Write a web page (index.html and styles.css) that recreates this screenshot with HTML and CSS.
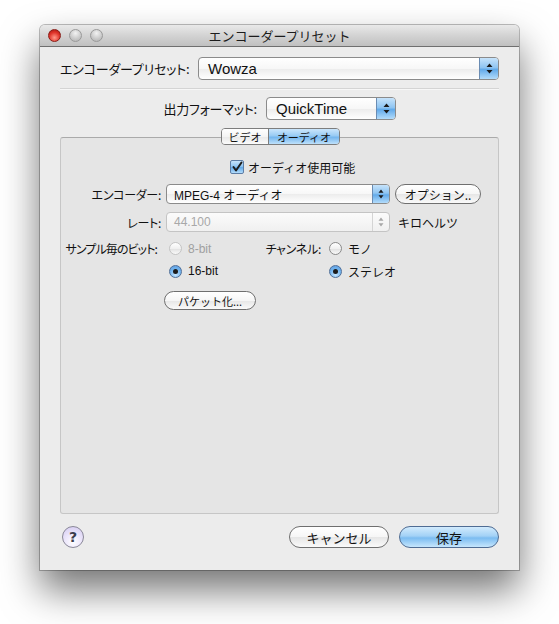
FILE: index.html
```html
<!DOCTYPE html>
<html lang="ja">
<head>
<meta charset="utf-8">
<title>エンコーダープリセット</title>
<link rel="stylesheet" href="styles.css">
</head>
<body>
<div class="stage">
  <div class="window">
    <div class="titlebar">
      <div class="lights">
        <span class="light red"></span>
        <span class="light"></span>
        <span class="light"></span>
      </div>
      <div class="title">エンコーダープリセット</div>
    </div>
    <div class="content">
      <div class="row preset-row">
        <span class="label">エンコーダープリセット:</span>
        <div class="popup big grow">
          <span class="popup-text">Wowza</span>
          <span class="arrows"><svg width="7" height="11" viewBox="0 0 7 11"><path d="M3.5 0.5 L6.5 4 L0.5 4 Z M0.5 7 L6.5 7 L3.5 10.5 Z" fill="#1a1a1a"/></svg></span>
        </div>
      </div>
      <div class="separator"></div>
      <div class="row format-row">
        <span class="label">出力フォーマット:</span>
        <div class="popup big format">
          <span class="popup-text">QuickTime</span>
          <span class="arrows"><svg width="7" height="11" viewBox="0 0 7 11"><path d="M3.5 0.5 L6.5 4 L0.5 4 Z M0.5 7 L6.5 7 L3.5 10.5 Z" fill="#1a1a1a"/></svg></span>
        </div>
      </div>
      <div class="tabs-wrap">
        <div class="tabs">
          <span class="tab">ビデオ</span>
          <span class="tab active">オーディオ</span>
        </div>
        <div class="box">
          <div class="check-row">
            <span class="checkbox"><svg width="12" height="12" viewBox="0 0 12 12"><path d="M2.5 6 L5 9.5 L10.5 1.5" fill="none" stroke="#1c1c1c" stroke-width="2" stroke-linecap="round" stroke-linejoin="round"/></svg></span>
            <span>オーディオ使用可能</span>
          </div>
          <div class="frow">
            <span class="flabel">エンコーダー:</span>
            <div class="popup small wide">
              <span class="popup-text">MPEG-4 オーディオ</span>
              <span class="arrows"><svg width="6" height="10" viewBox="0 0 6 10"><path d="M3 0.5 L5.5 3.8 L0.5 3.8 Z M0.5 6.2 L5.5 6.2 L3 9.5 Z" fill="#1a1a1a"/></svg></span>
            </div>
            <span class="btn options">オプション..</span>
          </div>
          <div class="frow">
            <span class="flabel">レート:</span>
            <div class="popup small wide disabled">
              <span class="popup-text">44.100</span>
              <span class="arrows"><svg width="6" height="10" viewBox="0 0 6 10"><path d="M3 0.5 L5.5 3.8 L0.5 3.8 Z M0.5 6.2 L5.5 6.2 L3 9.5 Z" fill="#a8a8a8"/></svg></span>
            </div>
            <span class="unit">キロヘルツ</span>
          </div>
          <div class="radio-grid">
            <span class="glabel tight">サンプル毎のビット:</span>
            <span class="ritem disabled"><span class="radio"></span>8-bit</span>
            <span class="glabel second">チャンネル:</span>
            <span class="ritem jp"><span class="radio"></span>モノ</span>
            <span></span>
            <span class="ritem"><span class="radio on"></span>16-bit</span>
            <span></span>
            <span class="ritem jp"><span class="radio on"></span>ステレオ</span>
          </div>
          <div class="packet-row">
            <span class="btn packet">パケット化...</span>
          </div>
        </div>
      </div>
      <div class="footer">
        <span class="help">?</span>
        <span class="spacer"></span>
        <span class="btn footer-btn">キャンセル</span>
        <span class="btn footer-btn default">保存</span>
      </div>
    </div>
  </div>
</div>
</body>
</html>
```
FILE: styles.css
```css
* { box-sizing: border-box; }
html, body { margin: 0; padding: 0; background: #ffffff; }
body {
  font-family: "Liberation Sans", "Noto Sans CJK JP", sans-serif;
  font-size: 13px;
  color: #111;
  width: 559px;
  height: 624px;
  overflow: hidden;
}
.stage { padding: 25px 0 0 40px; }
.window {
  width: 479px;
  height: 545px;
  border-radius: 5px 5px 0 0;
  box-shadow: 0 20px 38px rgba(0,0,0,0.55), 0 0 0 1px rgba(0,0,0,0.25);
  background: #ececec;
  display: flex;
  flex-direction: column;
}
.titlebar {
  height: 22px;
  border-radius: 5px 5px 0 0;
  background: linear-gradient(#e9e9e9, #d3d3d3 50%, #c0c0c0);
  border-bottom: 1px solid #6f6f6f;
  display: flex;
  align-items: center;
  position: relative;
}
.lights { display: flex; gap: 8px; padding-left: 8px; }
.light {
  width: 13px; height: 13px; border-radius: 50%;
  background: radial-gradient(circle at 50% 30%, #f2f2f2, #c8c8c8 60%, #b0b0b0);
  border: 1px solid #9a9a9a;
}
.light.red {
  background: radial-gradient(circle at 50% 70%, #ff9a8a, #e0342a 55%, #a0140e);
  border-color: #8a1c16;
}
.title {
  position: absolute; left: 0; right: 0; top: 0; bottom: 0;
  display: flex; align-items: center; justify-content: center;
  font-family: "Noto Sans CJK JP", sans-serif;
  font-size: 13px; color: #1c1c1c;
}
.content {
  flex: 1;
  padding: 10px 20px 0 20px;
  display: flex;
  flex-direction: column;
}
.row { display: flex; align-items: center; }
.label { font-family: "Noto Sans CJK JP", sans-serif; font-feature-settings: "palt"; font-size: 13px; white-space: nowrap; letter-spacing: -0.2px; }
.preset-row .label { width: 138px; }
.popup {
  display: flex; align-items: center;
  border: 1px solid #8b8b8b;
  border-radius: 4px;
  background: linear-gradient(#ffffff, #f7f7f7 50%, #ececec 51%, #ffffff);
  overflow: hidden;
  position: relative;
}
.popup.big { height: 23px; }
.popup.grow { flex: 1; }
.popup-text { flex: 1; padding-left: 9px; font-family: "Liberation Sans", "Noto Sans CJK JP", sans-serif; white-space: nowrap; }
.popup.big .popup-text { font-size: 15px; }
.arrows {
  align-self: stretch;
  display: flex; align-items: center; justify-content: center;
  background: linear-gradient(#c6e3fb, #8fc5f2 45%, #62aaea 55%, #b3dcfb);
  border-left: 1px solid #6a8cb3;
}
.popup.big .arrows { width: 19px; }
.separator { height: 1px; background: #d4d4d4; border-bottom: 1px solid #f7f7f7; margin: 8px 0 7px 0; box-sizing: content-box; }
.format-row .label { width: 197px; text-align: right; }
.popup.format { width: 130px; margin-left: 9px; }
.tabs-wrap { position: relative; margin-top: 8px; }
.tabs {
  position: absolute; left: 161px; top: 0;
  display: flex; height: 17px;
  border: 1px solid #7d7d7d; border-radius: 4px; overflow: hidden;
  font-family: "Noto Sans CJK JP", sans-serif; font-size: 11px;
  z-index: 2;
}
.tab {
  display: flex; align-items: center; justify-content: center;
  width: 46px;
  background: linear-gradient(#ffffff, #f4f4f4 50%, #e8e8e8 51%, #fbfbfb);
}
.tab.active {
  width: 71px;
  border-left: 1px solid #7d7d7d;
  background: linear-gradient(#cbe6fc, #98cbf4 45%, #74b6ee 55%, #bfe1fb);
}
.box {
  margin-top: 9px;
  height: 377px;
  background: #e5e5e5;
  border: 1px solid #c6c6c6;
  border-top-color: #aaaaaa;
  border-radius: 3px;
  padding: 22px 0 0 0;
  font-family: "Noto Sans CJK JP", sans-serif;
  font-size: 12px;
}
.check-row { display: flex; align-items: center; padding-left: 169px; gap: 4px; height: 14px; }
.checkbox {
  width: 14px; height: 14px;
  border: 1px solid #5d7da5; border-radius: 2px;
  background: linear-gradient(#c6e3fb, #8fc5f2 45%, #62aaea 55%, #b3dcfb);
  display: flex; align-items: center; justify-content: center;
}
.frow { display: flex; align-items: center; margin-top: 10px; height: 20px; }
.frow + .frow { margin-top: 8px; }
.flabel { width: 100px; text-align: right; font-feature-settings: "palt"; white-space: nowrap; letter-spacing: -0.3px; }
.popup.small { height: 20px; margin-left: 5px; border-radius: 4px; }
.popup.wide { width: 224px; }
.popup.small .popup-text { font-size: 12px; padding-left: 7px; }
.popup.small .arrows { width: 17px; }
.popup.disabled { border-color: #c4c4c4; background: linear-gradient(#fbfbfb, #f0f0f0); }
.popup.disabled .popup-text { color: #a8a8a8; }
.popup.disabled .arrows { background: transparent; border-left-color: #d4d4d4; }
.btn {
  display: inline-flex; align-items: center; justify-content: center;
  border: 1px solid #6f6f6f; border-radius: 11px;
  background: linear-gradient(#ffffff, #f6f6f6 50%, #e6e6e6 51%, #fafafa);
  font-family: "Noto Sans CJK JP", sans-serif;
  white-space: nowrap;
}
.btn.options { width: 86px; height: 20px; margin-left: 5px; font-size: 12px; }
.unit { margin-left: 8px; }
.radio-grid {
  display: grid;
  grid-template-columns: 96px 111px 61px auto;
  row-gap: 7px;
  margin-top: 8px;
  align-items: center;
}
.glabel {
  display: flex; justify-content: flex-end;
  white-space: nowrap; font-feature-settings: "palt"; letter-spacing: -0.3px;
}
.glabel.tight { letter-spacing: -0.9px; }
.glabel.second { padding-right: 8px; }
.ritem { display: flex; align-items: center; gap: 6px; padding-left: 12px; height: 14px; font-family: "Liberation Sans", "Noto Sans CJK JP", sans-serif; font-size: 12px; }
.ritem.jp { padding-left: 0; font-family: "Noto Sans CJK JP", sans-serif; }
.ritem.disabled { color: #a0a0a0; }
.radio {
  width: 13px; height: 13px; border-radius: 50%;
  border: 1px solid #8a8a8a;
  background: linear-gradient(#ffffff, #f0f0f0 50%, #e0e0e0 51%, #fafafa);
  display: flex; align-items: center; justify-content: center;
}
.ritem.disabled .radio { border-color: #c4c4c4; }
.radio.on {
  border-color: #4f6f98;
  background: radial-gradient(circle at 50% 80%, #c6e6ff, #72b4ee 55%, #5a9ae0);
}
.radio.on::after { content: ""; width: 5px; height: 5px; border-radius: 50%; background: #1b1b1b; }
.packet-row { padding-left: 103px; margin-top: 13px; }
.btn.packet { width: 92px; height: 19px; font-size: 11px; }
.footer { display: flex; align-items: center; margin-top: 12px; padding-left: 2px; }
.help {
  width: 22px; height: 22px; border-radius: 50%;
  border: 1px solid #8a8898;
  background: radial-gradient(circle at 50% 75%, #ffffff, #ece6fb 45%, #d2c8f0);
  display: flex; align-items: center; justify-content: center;
  font-family: "DejaVu Sans", sans-serif; font-weight: bold; font-size: 14px; color: #3c3c4c;
}
.spacer { flex: 1; }
.btn.footer-btn { width: 100px; height: 22px; font-size: 13px; }
.btn.footer-btn + .btn.footer-btn { margin-left: 10px; }
.btn.default {
  border-color: #4f6c93;
  background: linear-gradient(#d2ebfd, #a2d1f6 45%, #7bbcf1 55%, #c6e6fd);
}
```
